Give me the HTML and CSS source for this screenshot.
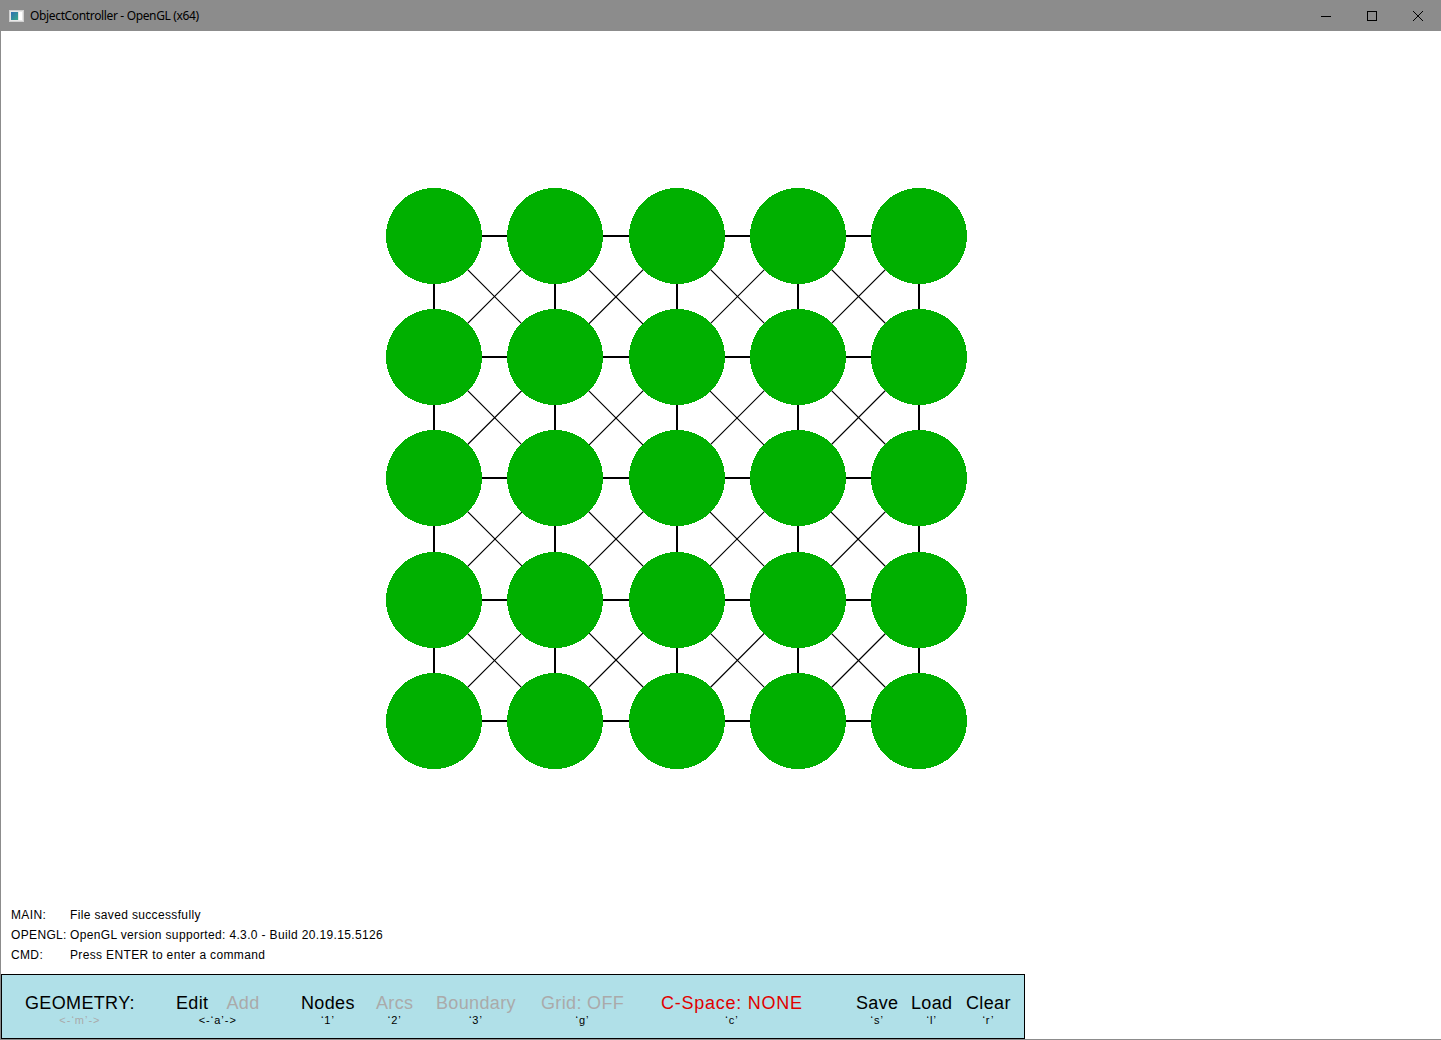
FILE: index.html
```html
<!DOCTYPE html>
<html>
<head>
<meta charset="utf-8">
<title>ObjectController - OpenGL (x64)</title>
<link rel="stylesheet" href="styles.css">
</head>
<body>
<div class="window">
  <header class="titlebar">
    <div class="app">
      <svg class="app-icon" width="15" height="12" viewBox="0 0 15 12">
        <defs>
          <linearGradient id="g1" x1="0" y1="0" x2="1" y2="1">
            <stop offset="0" stop-color="#2f6fb4"/>
            <stop offset="1" stop-color="#3aa98a"/>
          </linearGradient>
        </defs>
        <rect x="0.5" y="0.5" width="14" height="11" fill="#e8e8e8" stroke="#d0d0d0"/>
        <rect x="2" y="2" width="7" height="8" fill="url(#g1)"/>
        <rect x="10" y="2" width="3" height="8" fill="#ffffff"/>
      </svg>
      <span class="title">ObjectController - OpenGL (x64)</span>
    </div>
    <div class="controls">
      <div class="ctl"><svg width="10" height="10" viewBox="0 0 10 10"><path d="M0 5.5H10" stroke="#000" stroke-width="1"/></svg></div>
      <div class="ctl"><svg width="10" height="10" viewBox="0 0 10 10"><rect x="0.5" y="0.5" width="9" height="9" fill="none" stroke="#000" stroke-width="1"/></svg></div>
      <div class="ctl"><svg width="10" height="10" viewBox="0 0 10 10"><path d="M0 0L10 10M10 0L0 10" stroke="#000" stroke-width="1"/></svg></div>
    </div>
  </header>
  <div class="client">
    <svg class="canvas" width="1440" height="873" viewBox="1 31 1440 873">
      <g stroke="#000" stroke-width="2" shape-rendering="crispEdges" fill="none">
        <path d="M434 236H919M434 357H919M434 478H919M434 600H919M434 721H919"/>
        <path d="M434 236V721M555 236V721M677 236V721M798 236V721M919 236V721"/>
      </g>
      <g stroke="#000" stroke-width="1.2" fill="none">
        <path d="M434 236L919 721M555 236L919 600M677 236L919 478M798 236L919 357M434 357L798 721M434 478L677 721M434 600L555 721"/>
        <path d="M555 236L434 357M677 236L434 478M798 236L434 600M919 236L434 721M919 357L555 721M919 478L677 721M919 600L798 721"/>
      </g>
      <g fill="#00b000" shape-rendering="crispEdges">
        <circle cx="434" cy="236" r="48"/><circle cx="555" cy="236" r="48"/><circle cx="677" cy="236" r="48"/><circle cx="798" cy="236" r="48"/><circle cx="919" cy="236" r="48"/>
        <circle cx="434" cy="357" r="48"/><circle cx="555" cy="357" r="48"/><circle cx="677" cy="357" r="48"/><circle cx="798" cy="357" r="48"/><circle cx="919" cy="357" r="48"/>
        <circle cx="434" cy="478" r="48"/><circle cx="555" cy="478" r="48"/><circle cx="677" cy="478" r="48"/><circle cx="798" cy="478" r="48"/><circle cx="919" cy="478" r="48"/>
        <circle cx="434" cy="600" r="48"/><circle cx="555" cy="600" r="48"/><circle cx="677" cy="600" r="48"/><circle cx="798" cy="600" r="48"/><circle cx="919" cy="600" r="48"/>
        <circle cx="434" cy="721" r="48"/><circle cx="555" cy="721" r="48"/><circle cx="677" cy="721" r="48"/><circle cx="798" cy="721" r="48"/><circle cx="919" cy="721" r="48"/>
      </g>
    </svg>
    <div class="status">
      <span class="key">MAIN:</span><span>File saved successfully</span>
      <span class="key">OPENGL:</span><span>OpenGL version supported: 4.3.0 - Build 20.19.15.5126</span>
      <span class="key">CMD:</span><span>Press ENTER to enter a command</span>
    </div>
    <div class="toolbar">
      <div class="item"><span class="label">GEOMETRY:</span><span class="sub muted">&lt;-‘m’-&gt;</span></div>
      <div class="item"><span class="label pair"><span>Edit</span><span class="muted">Add</span></span><span class="sub">&lt;-‘a’-&gt;</span></div>
      <div class="item"><span class="label">Nodes</span><span class="sub">‘1’</span></div>
      <div class="item"><span class="label muted">Arcs</span><span class="sub">‘2’</span></div>
      <div class="item"><span class="label muted">Boundary</span><span class="sub">‘3’</span></div>
      <div class="item"><span class="label muted">Grid: OFF</span><span class="sub">‘g’</span></div>
      <div class="item"><span class="label alert wide">C-Space: NONE</span><span class="sub">‘c’</span></div>
      <div class="item"><span class="label">Save</span><span class="sub">‘s’</span></div>
      <div class="item"><span class="label">Load</span><span class="sub">‘l’</span></div>
      <div class="item"><span class="label">Clear</span><span class="sub">‘r’</span></div>
    </div>
  </div>
</div>
</body>
</html>
```
FILE: styles.css
```css
html, body {
  margin: 0;
  padding: 0;
  background: #ffffff;
}
body {
  width: 1441px;
  height: 1040px;
  overflow: hidden;
}
.window {
  width: 1441px;
  height: 1040px;
  display: flex;
  flex-direction: column;
}
.titlebar {
  height: 31px;
  flex: 0 0 31px;
  background: #8c8c8c;
  display: flex;
  align-items: center;
  justify-content: space-between;
}
.app {
  display: flex;
  align-items: center;
  padding-left: 9px;
}
.app-icon {
  display: block;
  margin-right: 6px;
}
.title {
  font-family: "Noto Sans", "Open Sans", sans-serif;
  font-size: 12px;
  letter-spacing: -0.35px;
  color: #000;
  line-height: 16px;
}
.controls {
  display: flex;
  height: 31px;
}
.ctl {
  width: 46px;
  height: 31px;
  display: flex;
  align-items: center;
  justify-content: center;
}
.ctl svg {
  display: block;
  shape-rendering: crispEdges;
}
.client {
  flex: 1 1 auto;
  border-left: 1px solid #8c8c8c;
  border-bottom: 1px solid #8c8c8c;
  display: flex;
  flex-direction: column;
  background: #fff;
}
.canvas {
  display: block;
  flex: 0 0 873px;
}
.status {
  height: 60px;
  margin-bottom: 10px;
  padding-top: 1px;
  box-sizing: border-box;
  display: grid;
  grid-template-columns: 59px auto;
  grid-auto-rows: 20px;
  align-items: center;
  padding-left: 10px;
  font-family: "Liberation Sans", Arial, sans-serif;
  font-size: 12px;
  letter-spacing: 0.35px;
  color: #000;
}
.status span {
  white-space: nowrap;
  line-height: 20px;
}
.toolbar {
  box-sizing: border-box;
  width: 1024px;
  height: 65px;
  background: #b0e0e8;
  border: 1px solid #000;
  padding: 18px 0 0 23px;
  display: grid;
  grid-template-columns: 151px 125px 75px 60px 105px 120px 195px 55px 55px auto;
  align-items: start;
  font-family: "Liberation Sans", Arial, sans-serif;
  color: #000;
}
.item {
  justify-self: start;
  display: inline-flex;
  flex-direction: column;
  align-items: center;
}
.label {
  font-size: 18px;
  line-height: 20px;
  white-space: nowrap;
  letter-spacing: 0.35px;
}
.wide {
  letter-spacing: 0.75px;
}
.pair {
  display: flex;
  gap: 18px;
}
.sub {
  font-size: 11px;
  line-height: 12px;
  margin-top: 1px;
  letter-spacing: 1px;
  white-space: nowrap;
}
.muted {
  color: #aaaaaa;
}
.alert {
  color: #e00000;
}
```
